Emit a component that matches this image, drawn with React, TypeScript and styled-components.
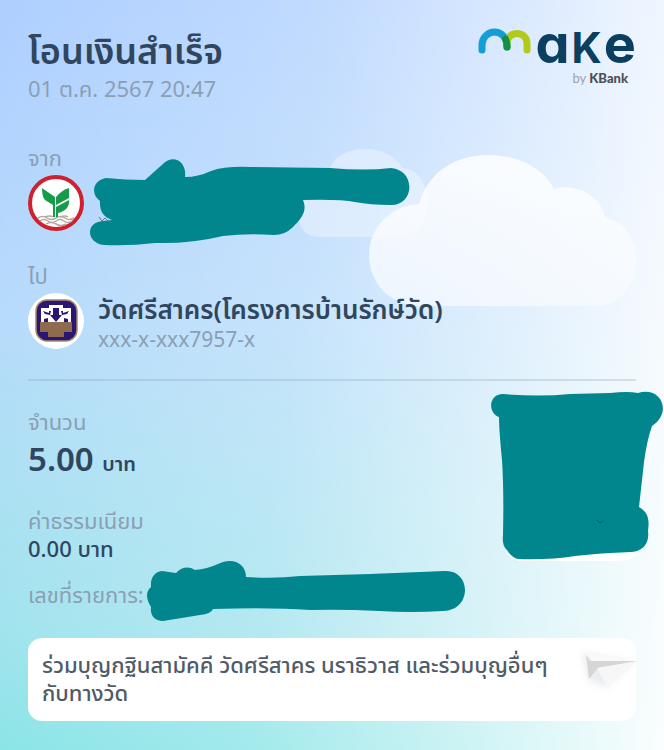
import React from "react";
import styled, { createGlobalStyle } from "styled-components";

const SCRIBBLE = "#00868c";

const GlobalStyle = createGlobalStyle`
  * { box-sizing: border-box; }
  body {
    margin: 0;
    font-family: "Noto Sans", "Noto Sans Thai", sans-serif;
    color: #30465f;
  }
`;

const Slip = styled.main`
  position: relative;
  min-height: 100vh;
  padding: 28px;
  overflow: hidden;
  background:
    linear-gradient(96deg, rgba(255, 255, 255, 0) 0%, rgba(255, 255, 255, 0.24) 44%, rgba(255, 255, 255, 0.6) 74%, rgba(255, 255, 255, 0.96) 100%),
    linear-gradient(180deg, #aecfff 0%, #b5dafb 42%, #aadff3 62%, #9ce2ec 85%, #84e3e5 100%);
`;

const Clouds = styled.svg`
  position: absolute;
  top: 145px;
  right: 24px;
  width: 344px;
  height: 165px;
`;

const Header = styled.header`
  position: relative;
  display: flex;
  justify-content: space-between;
  height: 115px;
`;

const Title = styled.h1`
  margin: 0;
  font-size: 36px;
  font-weight: 600;
  line-height: 46px;
`;

const Muted = styled.p<{ $size?: number }>`
  margin: 0;
  font-size: ${(p) => p.$size ?? 22}px;
  line-height: 28px;
  color: #8b9fb4;
`;

const Brand = styled.div`
  display: flex;
  flex-direction: column;
  align-items: flex-end;
`;

const Wordmark = styled.div`
  display: flex;
  align-items: baseline;
  gap: 2px;
  height: 41px;
  font-family: Inter, sans-serif;
  font-size: 54px;
  font-weight: 700;
  line-height: 31px;
  color: #0b3f60;
  font-feature-settings: "cv11";

  svg {
    align-self: flex-start;
    margin-right: 2px;
  }
`;

const ShortLetter = styled.span`
  font-size: 42px;
  text-transform: uppercase;
`;

const Byline = styled.div`
  padding-right: 8px;
  font-family: Lato, sans-serif;
  font-size: 13px;
  line-height: 18px;
  color: #98a2ae;

  b {
    font-weight: 900;
    color: #4c5056;
  }
`;

const Party = styled.section`
  position: relative;
  height: 118px;
`;

const PartyRow = styled.div`
  position: relative;
  display: flex;
  gap: 14px;
  margin-top: 4px;
`;

const Name = styled.h2`
  margin: 0;
  font-size: 26px;
  font-weight: 600;
  line-height: 32px;
`;

const Scribble = styled.svg<{ $left: number; $top: number }>`
  position: absolute;
  left: ${(p) => p.$left}px;
  top: ${(p) => p.$top}px;
  fill: ${SCRIBBLE};
`;

const Divider = styled.hr`
  margin: 0 0 26px;
  border: 0;
  border-top: 2px solid rgba(130, 150, 175, 0.26);
`;

const Details = styled.section`
  position: relative;
  height: 231px;
`;

const Amount = styled.p`
  margin: 0 0 18px;
  font-size: 33px;
  font-weight: 600;
  line-height: 48px;

  small {
    font-size: 20px;
  }
`;

const Fee = styled.p`
  margin: 0 0 18px;
  font-size: 22px;
  font-weight: 500;
  line-height: 28px;
`;

const Reference = styled.div`
  position: relative;
`;

const CodeCover = styled.svg`
  position: absolute;
  top: -16px;
  right: -27px;
  fill: ${SCRIBBLE};
`;

const Note = styled.section`
  position: relative;
  min-height: 83px;
  padding: 12px 80px 14px 14px;
  border-radius: 14px;
  background: #fff;
  font-size: 22px;
  font-weight: 500;
  line-height: 28px;
  color: #505b68;
`;

const Plane = styled.svg`
  position: absolute;
  top: 10px;
  right: -6px;
`;

function MakeArches() {
  return (
    <svg width="54" height="28" viewBox="477 27 54 28" fill="none" strokeWidth="7" strokeLinecap="round" aria-hidden="true">
      <path d="M481 49V44A12.500 13 0 0 1 506 44V46" stroke="#139ed8" />
      <path d="M506 46V42A10 9.500 0 0 1 526 42V49" stroke="#b1cb1c" />
      <path d="M504.500 38Q506 41 506 46" stroke="#109147" />
    </svg>
  );
}

function KBankBadge() {
  return (
    <svg width="56" height="56" viewBox="0 0 56 56" role="img" aria-label="KBank">
      <circle cx="28" cy="28" r="26" fill="#fff" stroke="#cf2030" strokeWidth="4" />
      <g fill="none" stroke="#b5aaa2" strokeWidth="1.500">
        <path d="M10 43q5-3 9 0t9 0 9 0 9 0" />
        <path d="M12 46q4-3 8 0t8 0 8 0 8 0" />
        <path d="M17 42q5-2 8 0M32 42q5-2 8 0M18 49q5-3 10 0t10 0" />
      </g>
      <g fill="#169c48">
        <path d="M14 13L27 22V42H25V30L17 25Q14 22 14 13Z" />
        <path d="M28 22Q34 15 41 13V23L28 30Z" />
        <path d="M28 32L41 25Q42 35 30 38V42H28Z" />
      </g>
    </svg>
  );
}

function RecipientBadge() {
  return (
    <svg width="56" height="56" viewBox="0 0 56 56" role="img" aria-label="SCB">
      <circle cx="28" cy="28" r="28" fill="#fff" />
      <rect x="8" y="7" width="41" height="41" rx="11" fill="#2a1773" stroke="#a58a70" strokeWidth="1.500" />
      <path d="M13 29V15H21V12H35V15H43V29Z" fill="#fff" />
      <path d="M25 15H31V22H34L28 29L22 22H25Z" fill="#2a1773" />
      <path d="M15 18L21 20V18H23L22 22L17 21ZM41 18L35 20V18H33L34 22L39 21ZM16 29V26L20 25V29ZM40 29V26L36 25V29Z" fill="#2a1773" />
      <path d="M12 29H44V39H36V44H20V39H12Z" fill="#8e6b4f" />
    </svg>
  );
}

export default function App() {
  return (
    <>
      <GlobalStyle />
      <Slip lang="th">
        <Clouds viewBox="296 145 344 165" aria-hidden="true">
          <defs>
            <linearGradient id="cloud" x1="0" y1="0" x2="0" y2="1">
              <stop offset="0" stopColor="#fff" stopOpacity="0.85" />
              <stop offset="1" stopColor="#f8fbfe" stopOpacity="0.72" />
            </linearGradient>
          </defs>
          <path
            d="M320 237Q298 237 298 211T326 184Q329 149 365 149Q391 149 402 168C436 170 438 237 398 237Z"
            fill="#f4f8ff"
            fillOpacity="0.45"
          />
          <path
            d="M421 306C389 306 369 282 369 255C369 228 391 205 419 204C427 174 454 155 488 155C519 155 544 169 554 189C578 182 602 198 605 218C625 220 636 241 636 262C636 286 618 306 596 306Z"
            fill="url(#cloud)"
          />
        </Clouds>

        <Header>
          <div>
            <Title>โอนเงินสำเร็จ</Title>
            <Muted>01 ต.ค. 2567 20:47</Muted>
          </div>
          <Brand>
            <Wordmark role="img" aria-label="make">
              <MakeArches />
              <span>a</span>
              <ShortLetter>k</ShortLetter>
              <span>e</span>
            </Wordmark>
            <Byline>
              by <b>KBank</b>
            </Byline>
          </Brand>
        </Header>

        <Party>
          <Muted>จาก</Muted>
          <PartyRow>
            <KBankBadge />
            <Scribble $left={61} $top={-18} width="322" height="90" viewBox="89 157 322 90" aria-hidden="true">
              <path d="M106 178Q125 180 145 180L164 163C174 154 187 162 185 177Q198 177 211 171Q225 166 250 167L330 168Q365 171 391 168C416 170 415 205 391 205Q370 205 355 202Q340 199 303 200C308 212 300 220 293 227Q285 235 274 235Q247 233 223 236Q190 244 155 243Q130 246 104 245C86 243 85 222 103 221L112 220Q99 216 100 201C90 194 93 180 106 178Z" />
              <path d="M99 217l3 4 3-3 3 3h3" fill="none" stroke="#61788d" />
            </Scribble>
          </PartyRow>
        </Party>

        <Party>
          <Muted>ไป</Muted>
          <PartyRow>
            <RecipientBadge />
            <div>
              <Name>วัดศรีสาคร(โครงการบ้านรักษ์วัด)</Name>
              <Muted $size={21}>xxx-x-xxx7957-x</Muted>
            </div>
          </PartyRow>
        </Party>

        <Divider />

        <Details>
          <Muted>จำนวน</Muted>
          <Amount>
            5.00 <small>บาท</small>
          </Amount>
          <Muted>ค่าธรรมเนียม</Muted>
          <Fee>0.00 บาท</Fee>
          <Reference>
            <Muted>เลขที่รายการ:</Muted>
            <Scribble $left={118} $top={-20} width="320" height="62" viewBox="146 560 320 62" aria-hidden="true">
              <path d="M162 571L176 573Q185 564 195 570Q207 569 218 564C232 557 246 563 246 577Q275 579 300 576L370 574L445 571C472 570 472 611 443 611Q410 613 380 611Q340 609 310 610Q270 607 213 609Q211 614 200 615L163 621C154 621 150 615 151 607Q143 594 151 587Q150 573 162 571Z" />
            </Scribble>
          </Reference>
          <CodeCover width="172" height="172" viewBox="491 391 172 172" aria-hidden="true">
            <path d="M506 554H636Q632 561 618 561H518Z" fill="#fff" />
            <path d="M503 394Q540 397 570 394L610 393Q628 391 638 393C661 386 673 412 652 426Q647 440 644 462L639 507C650 513 649 523 648 531C650 545 641 552 630 552Q600 553 575 556Q550 560 519 559C511 558 509 552 506 549Q502 545 503 535Q504 490 502 460Q499 430 499 417C487 412 489 394 503 394Z" />
            <path d="M597 520l3 3 3-2" fill="none" stroke="#08536b" />
          </CodeCover>
        </Details>

        <Note>
          ร่วมบุญกฐินสามัคคี วัดศรีสาคร นราธิวาส และร่วมบุญอื่นๆ กับทางวัด
          <Plane width="64" height="48" viewBox="580 648 64 48" aria-hidden="true">
            <defs>
              <filter id="soft" x="-30%" y="-30%" width="160%" height="160%">
                <feGaussianBlur stdDeviation="3" />
              </filter>
            </defs>
            <path d="M584 652L634 662L608 688L590 680Z" fill="#8090a0" fillOpacity="0.16" filter="url(#soft)" />
            <path d="M588 653L640 661L599 666Z" fill="#fafafa" />
            <path d="M588 655L591 679L600 668L640 661L592 661Z" fill="#d6d6d6" />
            <path d="M599 668L640 661L609 687Z" fill="#f7f7f7" />
          </Plane>
        </Note>
      </Slip>
    </>
  );
}
